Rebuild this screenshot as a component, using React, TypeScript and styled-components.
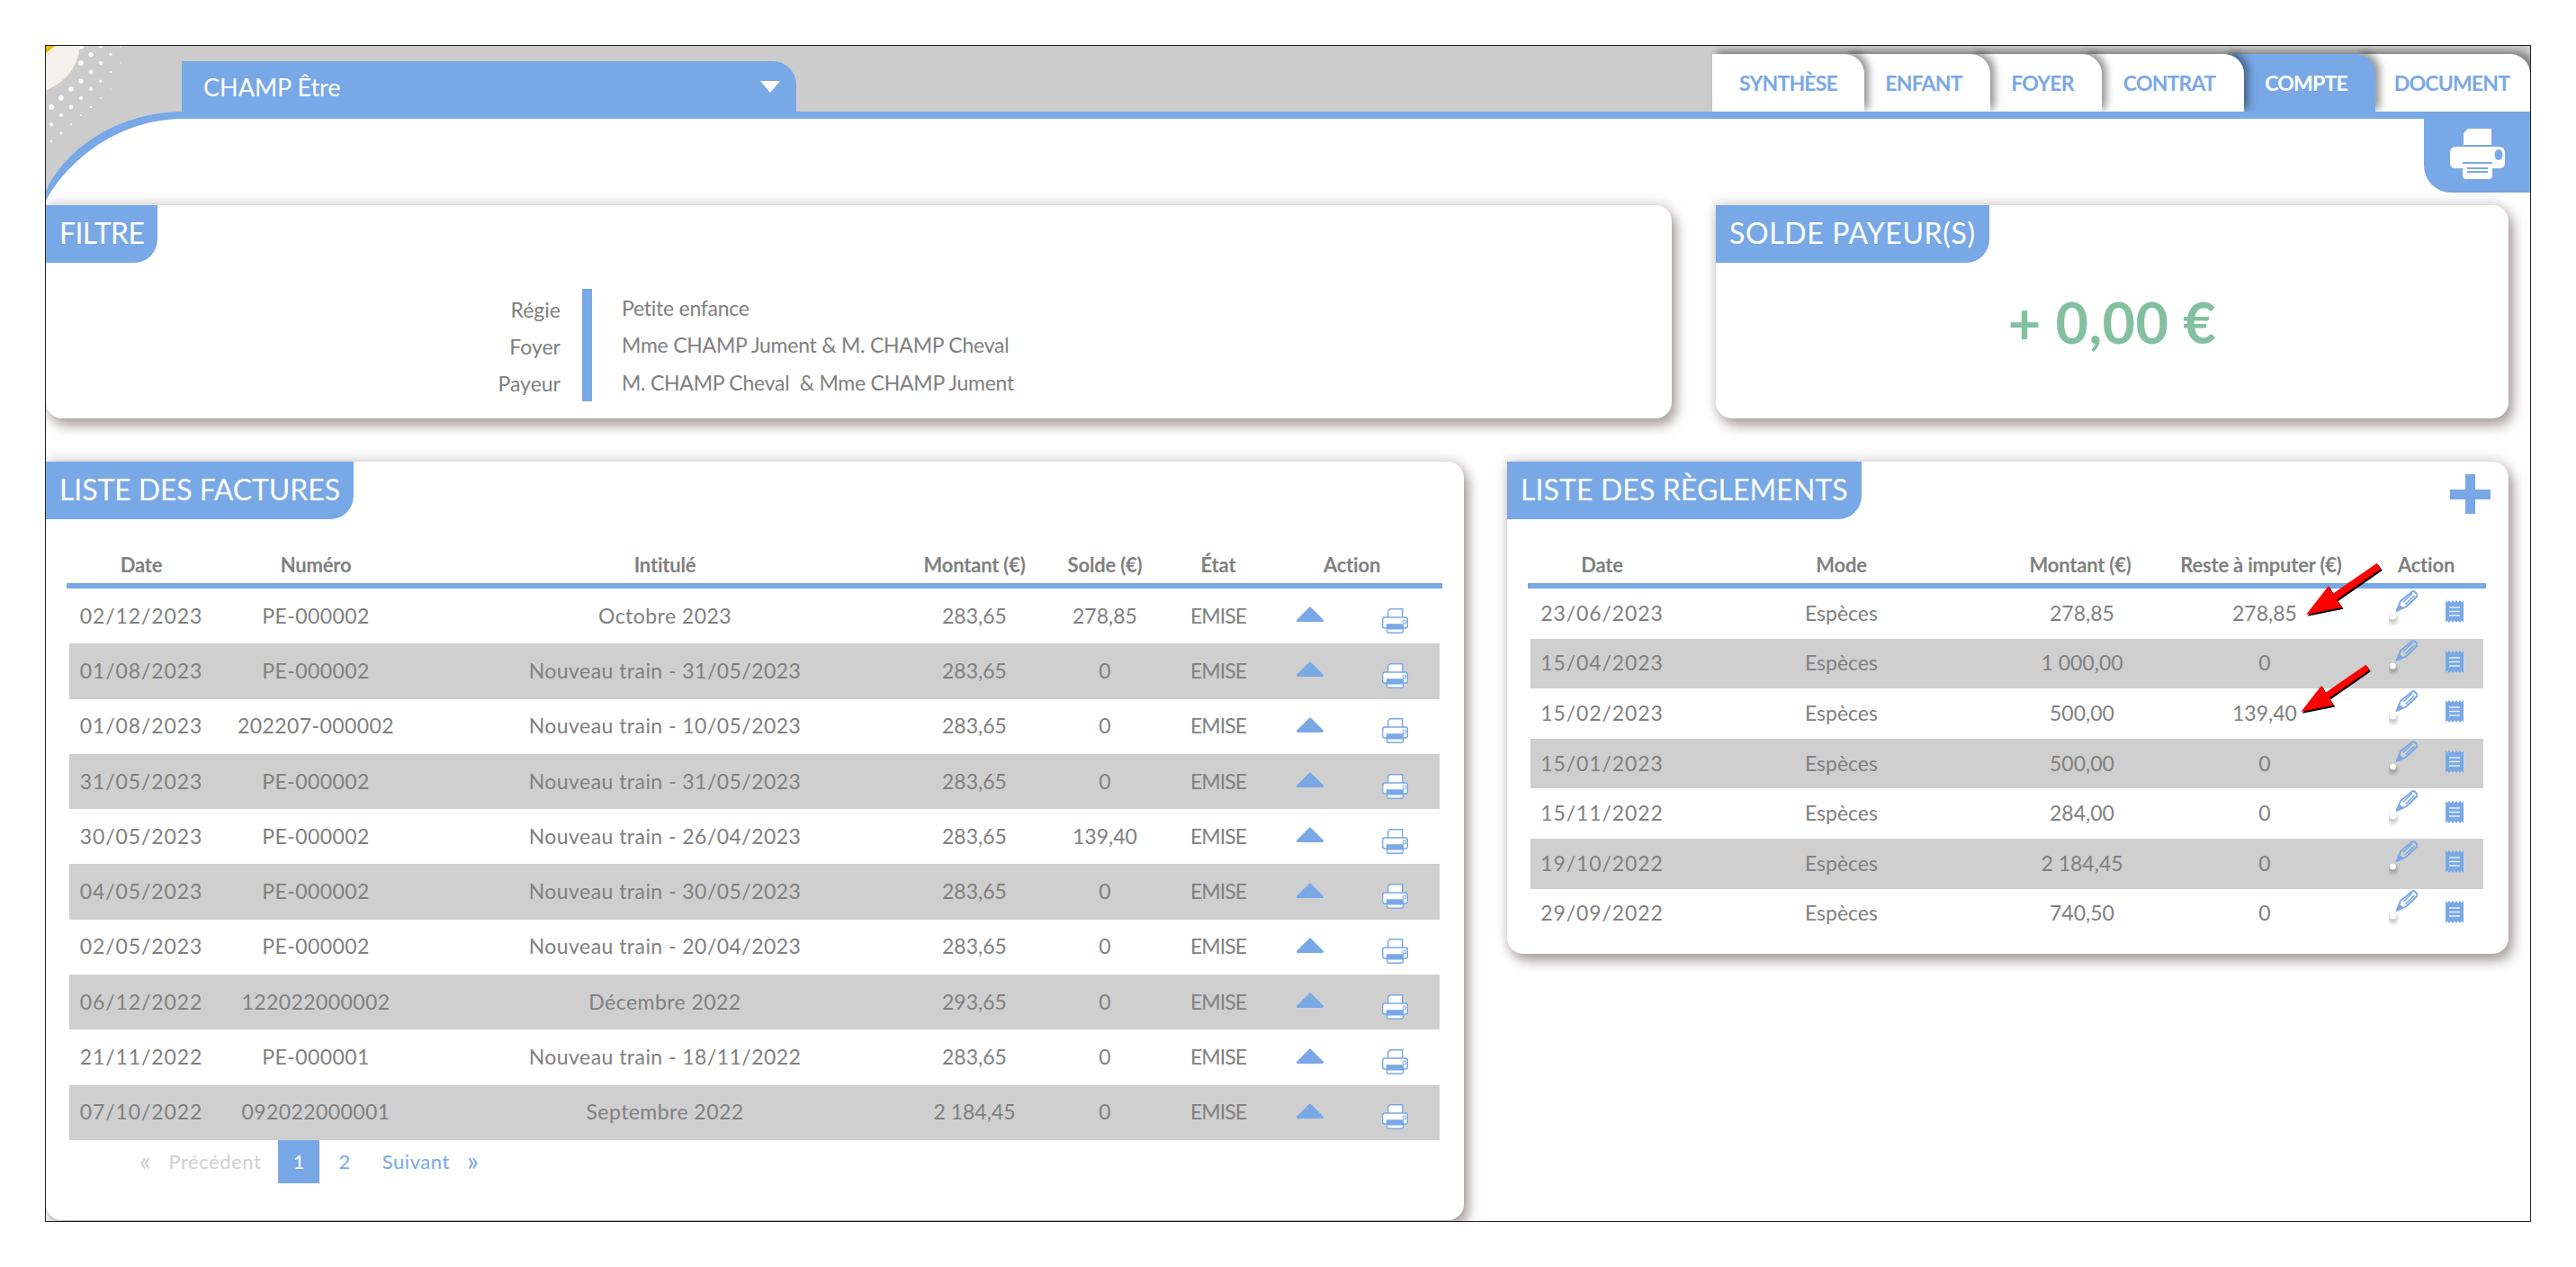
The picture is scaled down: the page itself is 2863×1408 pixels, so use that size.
import styled, { createGlobalStyle } from "styled-components";

const BLUE = "#79a8e6";
const TEXT = "#808080";

const GlobalStyle = createGlobalStyle`
  html, body {
    margin: 0;
    padding: 0;
    background: #fff;
  }
  body {
    font-family: "Lato", "Liberation Sans", sans-serif;
    color: ${TEXT};
  }
`;

const factures = [
  ["02/12/2023", "PE-000002", "Octobre 2023", "283,65", "278,85"],
  ["01/08/2023", "PE-000002", "Nouveau train - 31/05/2023", "283,65", "0"],
  ["01/08/2023", "202207-000002", "Nouveau train - 10/05/2023", "283,65", "0"],
  ["31/05/2023", "PE-000002", "Nouveau train - 31/05/2023", "283,65", "0"],
  ["30/05/2023", "PE-000002", "Nouveau train - 26/04/2023", "283,65", "139,40"],
  ["04/05/2023", "PE-000002", "Nouveau train - 30/05/2023", "283,65", "0"],
  ["02/05/2023", "PE-000002", "Nouveau train - 20/04/2023", "283,65", "0"],
  ["06/12/2022", "122022000002", "Décembre 2022", "293,65", "0"],
  ["21/11/2022", "PE-000001", "Nouveau train - 18/11/2022", "283,65", "0"],
  ["07/10/2022", "092022000001", "Septembre 2022", "2 184,45", "0"],
];

const reglements = [
  ["23/06/2023", "Espèces", "278,85", "278,85"],
  ["15/04/2023", "Espèces", "1 000,00", "0"],
  ["15/02/2023", "Espèces", "500,00", "139,40"],
  ["15/01/2023", "Espèces", "500,00", "0"],
  ["15/11/2022", "Espèces", "284,00", "0"],
  ["19/10/2022", "Espèces", "2 184,45", "0"],
  ["29/09/2022", "Espèces", "740,50", "0"],
];

const tabs = [
  { label: "SYNTHÈSE", width: 169 },
  { label: "ENFANT", width: 160 },
  { label: "FOYER", width: 144 },
  { label: "CONTRAT", width: 178 },
  { label: "COMPTE", width: 166, active: true },
  { label: "DOCUMENT", width: 192 },
];

const factureTrack = [0.9, 0.4, 0.45, 0, 0];
const reglementTrack = [0.9, 0, 0, 0];

// [x, y, r] in the corner drawing
const dots = [
  [39.5, 1, 2.6], [61, 0.5, 2], [83, 0.5, 0.8], [50, 9.5, 2.6], [72, 9.5, 1.6],
  [39, 19, 2.8], [61, 19, 2], [83, 19, 0.6], [50, 29, 2.2], [72, 29, 1.1],
  [39, 39, 2.5], [61, 39, 1.6], [72, 48, 0.5], [28, 48, 2.8], [50, 48, 1.8],
  [17, 58, 2.8], [39, 58, 2], [61, 58, 0.8], [6, 68, 3], [28, 68, 2.3],
  [50, 68, 1.1], [17, 77, 2.1], [39, 77, 1.1], [6, 87, 2], [28, 87, 1.1],
  [17, 97, 1.4], [6, 106, 1.3],
];

const CornerArt = () => (
  <Corner viewBox="0 0 152 175">
    <path d="M0 0H152V73H151C84 73 24 110 0 161Z" fill="#cccccc" />
    <circle cx="-18" cy="-4" r="56" fill="#f7f0ea" />
    <path d="M0 0H10L0 8Z" fill="#f0b400" />
    {dots.map(([x, y, r]) => (
      <circle key={`${x}-${y}`} cx={x} cy={y} r={r} fill="#fff" />
    ))}
    <path d="M0 161C24 110 84 73 152 73V81C90 81 30 118 0 172Z" fill={BLUE} />
  </Corner>
);

const BigPrinter = () => (
  <svg width="61" height="56" viewBox="0 0 61 56">
    <path d="M20 0H46V18H15V5Z" fill="#fff" />
    <path d="M7 20H54Q61 20 61 27V38Q61 44 55 44H47V37H14V44H6Q0 44 0 38V27Q0 20 7 20Z" fill="#fff" />
    <ellipse cx="54" cy="29" rx="4.5" ry="6" fill={BLUE} />
    <path d="M14 39H47V52Q47 56 43 56H18Q14 56 14 52Z" fill="#fff" />
    <path d="M19 44H42M19 48H42" stroke={BLUE} strokeWidth="2" />
  </svg>
);

const SmallPrinter = () => (
  <svg width="29" height="28" viewBox="0 0 29 28">
    <path d="M9 .7H22.7V11H6.7V3Z" fill="#fff" stroke={BLUE} strokeWidth="1.4" />
    <path d="M3 10H26Q28.3 10 28.3 12.5V20Q28.3 22 26 22H3Q.7 22 .7 20V12.5Q.7 10 3 10Z" fill="#fff" stroke={BLUE} strokeWidth="1.4" />
    <circle cx="25" cy="15" r="2" fill="#fff" stroke={BLUE} />
    <path d="M5.5 18H23.5V25Q23.5 27.3 21 27.3H8Q5.5 27.3 5.5 25Z" fill="#fff" stroke={BLUE} strokeWidth="1.4" />
    <rect x="5" y="18" width="19" height="5.5" fill={BLUE} />
  </svg>
);

const Triangle = () => (
  <svg width="30" height="17" viewBox="0 0 30 17">
    <path d="M15 2L28.5 15.5H1.5Z" fill={BLUE} stroke={BLUE} strokeWidth="3" strokeLinejoin="round" />
  </svg>
);

const Pencil = () => (
  <svg width="32" height="40" viewBox="0 0 32 40">
    <defs>
      <radialGradient id="dotShadow">
        <stop offset="0%" stopColor="#000" stopOpacity="0.28" />
        <stop offset="100%" stopColor="#000" stopOpacity="0" />
      </radialGradient>
    </defs>
    <ellipse cx="4.5" cy="32" rx="8" ry="8" fill="url(#dotShadow)" />
    <path d="M8.5 23L13 12L26 1.5Q27.5 .5 29 2L31 4Q32 5.5 31 7L19 18.5Z" fill="none" stroke={BLUE} strokeWidth="1.9" strokeLinejoin="round" />
    <path d="M16 13L26 3.5M18.5 15.5L28.5 6" stroke={BLUE} strokeWidth="1.6" />
    <path d="M8 24L11.5 15.5L17 20Z" fill={BLUE} />
    <circle cx="4.5" cy="29" r="3.4" fill="#fff" />
  </svg>
);

const Receipt = () => (
  <svg width="20" height="25" viewBox="0 0 20 25">
    <path
      d="M0 0L2 2.4L4 0L6 2.4L8 0L10 2.4L12 0L14 2.4L16 0L18 2.4L20 0V25L18 22.6L16 25L14 22.6L12 25L10 22.6L8 25L6 22.6L4 25L2 22.6L0 25Z"
      fill={BLUE}
    />
    <path d="M4 8H16M4 12.5H16M4 17H16" stroke="#fff" strokeOpacity="0.8" strokeWidth="1.6" />
  </svg>
);

const RedArrow = ({ width }: { width: number }) => (
  <svg width={width} viewBox="0 0 94 62">
    <path d="M8 58L33 26L37.8 34.7L86.8 .7L91.2 7.3L42.2 41.3L48 50Z" fill="#000" transform="translate(1.5 1.8)" />
    <path d="M8 58L33 26L37.8 34.7L86.8 .7L91.2 7.3L42.2 41.3L48 50Z" fill="#f00" />
  </svg>
);

const App = () => {
  return (
    <>
      <GlobalStyle />
      <Frame>
        <CornerArt />
        <TopBar>
          <SelectTab>
            CHAMP Être
            <Caret />
          </SelectTab>
          <Tabs>
            {tabs.map((t, i) => (
              <Tab key={t.label} $first={i === 0} $active={!!t.active} $width={t.width} $z={10 - i}>
                {t.label}
              </Tab>
            ))}
          </Tabs>
        </TopBar>
        <Strip />
        <PrintRow>
          <PrintButton>
            <BigPrinter />
          </PrintButton>
        </PrintRow>

        <TopCards>
          <Card $width={1807} $height={237}>
            <CardTitle $track={-0.6}>FILTRE</CardTitle>
            <FilterBody>
              <FilterLabels>
                <span>Régie</span>
                <span>Foyer</span>
                <span>Payeur</span>
              </FilterLabels>
              <FilterBar />
              <FilterValues>
                <span>Petite enfance</span>
                <span>Mme CHAMP Jument &amp; M. CHAMP Cheval</span>
                <span>M. CHAMP Cheval &nbsp;&amp; Mme CHAMP Jument</span>
              </FilterValues>
            </FilterBody>
          </Card>
          <Card $width={881} $height={237}>
            <CardTitle $track={0.65}>SOLDE PAYEUR(S)</CardTitle>
            <Balance>+ 0,00 €</Balance>
          </Card>
        </TopCards>

        <BottomCards>
          <Card $width={1576} $height={843}>
            <CardTitle $track={-0.1}>LISTE DES FACTURES</CardTitle>
            <Table $width={1529}>
              <HeadRow $cols={factureCols}>
                <span>Date</span>
                <span>Numéro</span>
                <span>Intitulé</span>
                <span>Montant (€)</span>
                <span>Solde (€)</span>
                <span>État</span>
                <ActionHead>Action</ActionHead>
              </HeadRow>
              {factures.map((row, i) => (
                <Row key={i} $cols={factureCols} $height={61.3} $striped={i % 2 === 1}>
                  {row.map((cell, j) => (
                    <Cell key={j} $track={factureTrack[j]}>
                      {cell}
                    </Cell>
                  ))}
                  <Cell $track={-1}>EMISE</Cell>
                  <IconCell $bottom={2} $right={0}>
                    <Triangle />
                  </IconCell>
                  <IconCell $bottom={-12} $right={7}>
                    <SmallPrinter />
                  </IconCell>
                </Row>
              ))}
            </Table>
            <Pager>
              <PageArrow $muted>«</PageArrow>
              <PageLink $muted>Précédent</PageLink>
              <PageCurrent>1</PageCurrent>
              <PageLink>2</PageLink>
              <PageLink $spaced>Suivant</PageLink>
              <PageArrow>»</PageArrow>
            </Pager>
          </Card>

          <Card $width={1113} $height={547}>
            <CardTitle $track={0.1}>LISTE DES RÈGLEMENTS</CardTitle>
            <AddButton />
            <Table $width={1065}>
              <HeadRow $cols={reglementCols}>
                <span>Date</span>
                <span>Mode</span>
                <HeadShift $right={4}>Montant (€)</HeadShift>
                <HeadShift $right={8}>Reste à imputer (€)</HeadShift>
                <ActionHead>
                  <HeadShift $right={6}>Action</HeadShift>
                </ActionHead>
              </HeadRow>
              {reglements.map((row, i) => (
                <Row key={i} $cols={reglementCols} $height={55.6} $striped={i % 2 === 1}>
                  {row.map((cell, j) => (
                    <Cell key={j} $track={reglementTrack[j]}>
                      {cell}
                    </Cell>
                  ))}
                  <IconCell $bottom={10} $right={-2}>
                    <Pencil />
                  </IconCell>
                  <IconCell $bottom={2} $right={6}>
                    <Receipt />
                  </IconCell>
                </Row>
              ))}
            </Table>
            <ArrowOne>
              <RedArrow width={94} />
            </ArrowOne>
            <ArrowTwo>
              <RedArrow width={86} />
            </ArrowTwo>
          </Card>
        </BottomCards>
      </Frame>
    </>
  );
};

export default App;

const factureCols = "160px 228px 548px 140px 150px 102px 102px 93px";
const reglementCols = "159px 373px 162px 244px 62px 59px";

const Frame = styled.div`
  position: relative;
  box-sizing: border-box;
  width: 2763px;
  height: 1308px;
  margin: 50px 0 0 50px;
  border: 1px solid #222;
  overflow: hidden;
  background: #fff;
`;

const Corner = styled.svg`
  position: absolute;
  left: 0;
  top: 0;
  width: 152px;
  height: 175px;
  z-index: 1;
`;

const TopBar = styled.div`
  height: 73px;
  padding-left: 151px;
  display: flex;
  justify-content: space-between;
  align-items: flex-end;
  background: #cccccc;
`;

const SelectTab = styled.div`
  position: relative;
  z-index: 2;
  box-sizing: border-box;
  width: 683px;
  height: 56px;
  padding: 0 18px 0 24px;
  display: flex;
  align-items: center;
  justify-content: space-between;
  background: ${BLUE};
  border-top-right-radius: 26px;
  color: #fff;
  font-size: 27px;
`;

const Caret = styled.span`
  width: 0;
  height: 0;
  border-left: 11px solid transparent;
  border-right: 11px solid transparent;
  border-top: 13px solid #fff;
`;

const Tabs = styled.div`
  display: flex;
  align-items: flex-end;
`;

const Tab = styled.div<{ $first: boolean; $active: boolean; $width: number; $z: number }>`
  position: relative;
  z-index: ${(p) => p.$z};
  box-sizing: border-box;
  width: ${(p) => p.$width}px;
  height: 64px;
  margin-left: ${(p) => (p.$first ? 0 : -20)}px;
  padding: 0 0 1px ${(p) => (p.$first ? 0 : 12)}px;
  display: flex;
  align-items: center;
  justify-content: center;
  background: ${(p) => (p.$active ? BLUE : "#fff")};
  color: ${(p) => (p.$active ? "#fff" : BLUE)};
  border-top-right-radius: 22px;
  box-shadow: 5px -3px 9px rgba(0, 0, 0, 0.42);
  font-size: 23px;
  font-weight: 700;
  letter-spacing: -0.8px;

  &:last-child {
    padding-left: 18px;
  }
`;

const Strip = styled.div`
  position: relative;
  z-index: 20;
  height: 8px;
  margin-left: 151px;
  background: ${BLUE};
`;

const PrintRow = styled.div`
  display: flex;
  justify-content: flex-end;
`;

const PrintButton = styled.div`
  width: 118px;
  height: 82px;
  padding-top: 11px;
  box-sizing: border-box;
  display: flex;
  justify-content: center;
  align-items: flex-start;
  background: ${BLUE};
  border-bottom-left-radius: 30px;
`;

const TopCards = styled.div`
  margin-top: 14px;
  display: flex;
  gap: 49px;
`;

const BottomCards = styled.div`
  margin-top: 48px;
  display: flex;
  align-items: flex-start;
  gap: 48px;
`;

const Card = styled.section<{ $width: number; $height: number }>`
  position: relative;
  box-sizing: border-box;
  width: ${(p) => p.$width}px;
  height: ${(p) => p.$height}px;
  background: #fff;
  border-radius: 0 18px 18px 18px;
  box-shadow: 0 -2px 14px rgba(120, 100, 100, 0.28), 5px 8px 14px rgba(110, 90, 90, 0.55);
`;

const CardTitle = styled.h2<{ $track: number }>`
  display: inline-flex;
  align-items: center;
  box-sizing: border-box;
  height: 64px;
  margin: 0;
  padding: 0 15px 4px 15px;
  background: ${BLUE};
  color: #fff;
  font-size: 32px;
  font-weight: 400;
  letter-spacing: ${(p) => p.$track}px;
  border-bottom-right-radius: 26px;
  vertical-align: top;
`;

const FilterBody = styled.div`
  margin-top: 29px;
  display: flex;
  height: 125px;
`;

const FilterLabels = styled.div`
  width: 572px;
  padding-top: 2px;
  box-sizing: border-box;
  display: flex;
  flex-direction: column;
  justify-content: space-around;
  align-items: flex-end;
  font-size: 23px;
`;

const FilterBar = styled.div`
  width: 11px;
  margin: 0 33px 0 24px;
  background: ${BLUE};
`;

const FilterValues = styled.div`
  display: flex;
  flex-direction: column;
  justify-content: space-around;
  font-size: 23px;
  letter-spacing: -0.25px;
`;

const Balance = styled.div`
  margin-top: 28px;
  text-align: center;
  color: #82c0a0;
  font-size: 63px;
  font-weight: 700;
  letter-spacing: 0.4px;
`;

const Table = styled.div<{ $width: number }>`
  width: ${(p) => p.$width}px;
  margin-left: 23px;
`;

const HeadRow = styled.div<{ $cols: string }>`
  box-sizing: border-box;
  height: 77px;
  padding: 0 3px 8px;
  display: grid;
  grid-template-columns: ${(p) => p.$cols};
  align-items: end;
  justify-items: center;
  border-bottom: 6px solid ${BLUE};
  font-size: 22px;
  line-height: 24px;
  font-weight: 700;
  letter-spacing: -0.2px;
`;

const HeadShift = styled.span<{ $right: number }>`
  margin-right: ${(p) => p.$right}px;
`;

const ActionHead = styled.span`
  grid-column: span 2;
`;

const Row = styled.div<{ $cols: string; $height: number; $striped: boolean }>`
  box-sizing: border-box;
  height: ${(p) => p.$height}px;
  margin: 0 3px;
  padding-bottom: 2px;
  display: grid;
  grid-template-columns: ${(p) => p.$cols};
  align-items: center;
  justify-items: center;
  background: ${(p) => (p.$striped ? "#cfcfcf" : "transparent")};
  font-size: 23px;
`;

const Cell = styled.span<{ $track: number }>`
  letter-spacing: ${(p) => p.$track}px;
`;

const IconCell = styled.span<{ $bottom: number; $right: number }>`
  display: flex;
  margin-bottom: ${(p) => p.$bottom}px;
  margin-right: ${(p) => p.$right}px;
`;

const Pager = styled.div`
  height: 48px;
  padding-left: 104px;
  display: flex;
  align-items: center;
  gap: 19px;
  font-size: 22px;
  letter-spacing: 0.55px;
`;

const PageLink = styled.span<{ $muted?: boolean; $spaced?: boolean }>`
  color: ${(p) => (p.$muted ? "#cfcfcf" : BLUE)};
  margin-left: ${(p) => (p.$spaced ? 16 : 0)}px;
`;

const PageArrow = styled(PageLink)`
  font-size: 30px;
  line-height: 30px;
  margin-top: -4px;
`;

const PageCurrent = styled.span`
  align-self: stretch;
  width: 46px;
  margin-right: 2px;
  display: flex;
  align-items: center;
  justify-content: center;
  background: ${BLUE};
  color: #fff;
`;

const AddButton = styled.div`
  position: absolute;
  right: 20px;
  top: 14px;
  width: 45px;
  height: 44px;
  background:
    linear-gradient(${BLUE}, ${BLUE}) center / 11px 100% no-repeat,
    linear-gradient(${BLUE}, ${BLUE}) center / 100% 11px no-repeat;
  border-radius: 4px;
`;

const ArrowOne = styled.div`
  position: absolute;
  left: 880px;
  top: 112px;
  line-height: 0;
`;

const ArrowTwo = styled.div`
  position: absolute;
  left: 875px;
  top: 225px;
  line-height: 0;
`;
